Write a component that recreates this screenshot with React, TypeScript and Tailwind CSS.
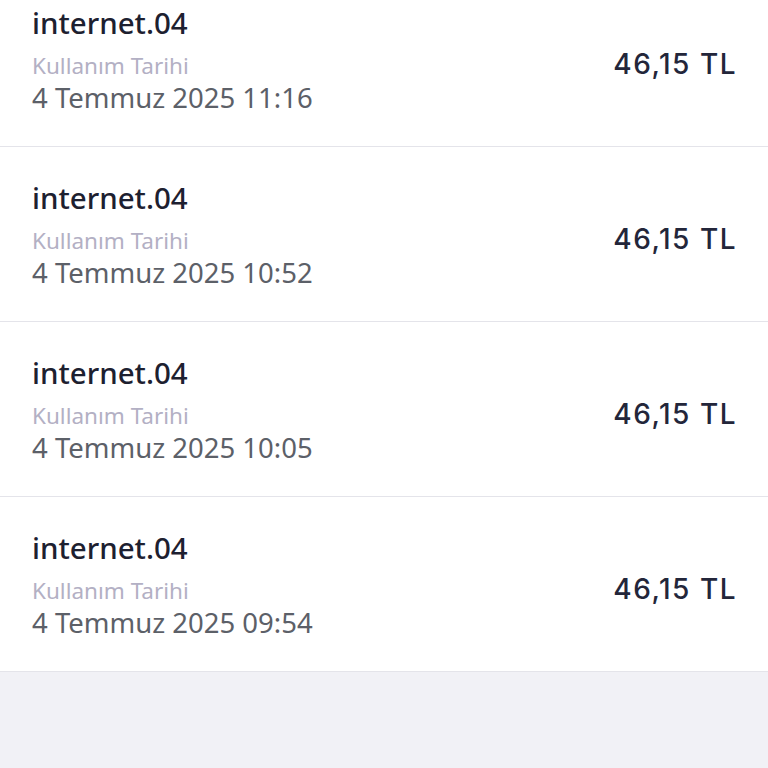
const usages = [
	{ name: 'internet.04', date: '4 Temmuz 2025 11:16', amount: '46,15 TL' },
	{ name: 'internet.04', date: '4 Temmuz 2025 10:52', amount: '46,15 TL' },
	{ name: 'internet.04', date: '4 Temmuz 2025 10:05', amount: '46,15 TL' },
	{ name: 'internet.04', date: '4 Temmuz 2025 09:54', amount: '46,15 TL' },
];

const UsageRow = ({ name, date, amount }: { name: string; date: string; amount: string }) => {
	return (
		<div className="flex items-center justify-between border-b border-[#e4e4ea] bg-white pt-[33px] pb-[32px] pl-[32px] pr-[31px]">
			<div className="flex flex-col">
				<span className="text-[29.5px] leading-[36px] font-medium text-[#1d2030]">{name}</span>
				<span className="mt-[11px] text-[22.5px] leading-[28px] text-[#b3b0c4]">Kullanım Tarihi</span>
				<span className="mt-[2px] text-[27.5px] leading-[32px] text-[#5c6068]">{date}</span>
			</div>
			<span className="pt-[8px] font-['Inter',sans-serif] text-[28px] leading-[36px] font-medium tracking-[1.5px] text-[#23263a]">
				{amount}
			</span>
		</div>
	);
};

export default function App() {
	return (
		<div className="h-[768px] overflow-hidden bg-[#f1f1f6] font-['Noto_Sans',sans-serif]">
			<div className="-mt-[28px] flex flex-col">
				{usages.map((u, i) => (
					<UsageRow key={i} {...u} />
				))}
			</div>
		</div>
	);
}
